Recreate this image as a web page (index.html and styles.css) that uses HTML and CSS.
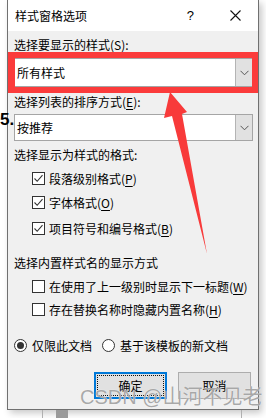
FILE: index.html
```html
<!DOCTYPE html>
<html lang="zh-CN">
<head>
    <meta charset="UTF-8">
    <meta name="viewport" content="width=device-width, initial-scale=1.0">
    <title>样式窗格选项</title>
    <link rel="stylesheet" href="styles.css">
</head>
<body>

    <div class="page">
        <div class="dialog">
            <!-- Title bar -->
            <div class="titlebar">
                <span class="title">样式窗格选项</span>
                <span class="help">?</span>
                <svg class="close" width="11" height="11" viewBox="0 0 11 11">
                    <path d="M0.5 0.5 L10.5 10.5 M10.5 0.5 L0.5 10.5" stroke="#111" stroke-width="1.1" fill="none"/>
                </svg>
            </div>

            <div class="dialog-body">
                <div class="label l1">选择要显示的样式(<u>S</u>):</div>
                <div class="combo combo-tall">
                    <span class="combo-text">所有样式</span>
                    <span class="combo-btn">
                        <svg width="9" height="6" viewBox="0 0 9 6"><path d="M0.5 0.8 L4.5 4.8 L8.5 0.8" stroke="#555" fill="none"/></svg>
                    </span>
                </div>

                <div class="label l2">选择列表的排序方式(<u>E</u>):</div>
                <div class="combo">
                    <span class="combo-text">按推荐</span>
                    <span class="combo-btn">
                        <svg width="9" height="6" viewBox="0 0 9 6"><path d="M0.5 0.8 L4.5 4.8 L8.5 0.8" stroke="#555" fill="none"/></svg>
                    </span>
                </div>

                <div class="label l3">选择显示为样式的格式:</div>
                <div class="check-row cb1">
                    <span class="box checked"><svg width="11" height="11" viewBox="0 0 11 11"><path d="M1.5 5.5 L4.2 8.3 L9.5 2.2" stroke="#333" stroke-width="1.1" fill="none"/></svg></span>
                    <span>段落级别格式(<u>P</u>)</span>
                </div>
                <div class="check-row cb2">
                    <span class="box checked"><svg width="11" height="11" viewBox="0 0 11 11"><path d="M1.5 5.5 L4.2 8.3 L9.5 2.2" stroke="#333" stroke-width="1.1" fill="none"/></svg></span>
                    <span>字体格式(<u>O</u>)</span>
                </div>
                <div class="check-row cb3">
                    <span class="box checked"><svg width="11" height="11" viewBox="0 0 11 11"><path d="M1.5 5.5 L4.2 8.3 L9.5 2.2" stroke="#333" stroke-width="1.1" fill="none"/></svg></span>
                    <span>项目符号和编号格式(<u>B</u>)</span>
                </div>

                <div class="label l4">选择内置样式名的显示方式</div>
                <div class="check-row cb4">
                    <span class="box"></span>
                    <span>在使用了上一级别时显示下一标题(<u>W</u>)</span>
                </div>
                <div class="check-row cb5">
                    <span class="box"></span>
                    <span>存在替换名称时隐藏内置名称(<u>H</u>)</span>
                </div>

                <div class="radio-row">
                    <span class="radio on"></span>
                    <span class="radio-label">仅限此文档</span>
                    <span class="radio"></span>
                    <span class="radio-label">基于该模板的新文档</span>
                </div>

                <div class="buttons">
                    <button class="btn btn-default"><span class="focus">确定</span></button>
                    <button class="btn">取消</button>
                </div>
            </div>
        </div>

        <!-- bits of the document behind the dialog -->
        <div class="below"><span class="below-block"></span></div>

        <!-- annotations drawn on the screenshot -->
        <div class="stray">5.</div>
        <div class="highlight"></div>
        <svg class="arrow" width="266" height="418" viewBox="0 0 266 418">
            <polygon points="170,92 187,112 182,114 207,254 172,116 164,118" fill="#f83a3a"/>
        </svg>
        <div class="watermark">CSDN @山河不见老</div>
    </div>

</body>
</html>
```

FILE: styles.css
```css
body {
    margin: 0;
    padding: 0;
    background-color: #ffffff;
    font-family: "Noto Sans CJK SC", "Microsoft YaHei", sans-serif;
    font-size: 12px;
    color: #000;
}

.page {
    position: relative;
    width: 266px;
    height: 418px;
    overflow: hidden;
}

.dialog {
    margin-left: 7px;
    width: 250px;
    border: 1px solid #707070;
    border-top: none;
    background-color: #f0f0f0;
    box-shadow: 3px 3px 7px rgba(0, 0, 0, 0.22);
}

/* Title bar */
.titlebar {
    display: flex;
    align-items: center;
    height: 31px;
    background-color: #ffffff;
    padding-left: 7px;
}

.title {
    line-height: 31px;
}

.help {
    margin-left: auto;
    font-size: 13px;
    line-height: 31px;
    font-family: "Liberation Sans", sans-serif;
}

.close {
    margin-left: 36px;
    margin-right: 17px;
}

/* Body */
.dialog-body {
    padding: 0 6px 10px 6px;
}

.label {
    height: 16px;
    line-height: 16px;
    white-space: nowrap;
}

.l1 { margin-top: 6px; }
.l2 { margin-top: 7px; }
.l3 { margin-top: 6px; }
.l4 { margin-top: 17px; }

u {
    text-decoration-thickness: 1px;
    text-underline-offset: 2px;
}

/* Combo boxes */
.combo {
    display: flex;
    align-items: stretch;
    height: 27px;
    margin-top: 4px;
    margin-right: -1px;
    box-sizing: border-box;
    border: 1px solid #a5a5a5;
    background-color: #ffffff;
}

.combo-tall {
    height: 29px;
    margin-top: 5px;
}

.combo-text {
    flex: 1;
    padding-left: 2px;
    display: flex;
    align-items: center;
}

.combo-btn {
    width: 16px;
    display: flex;
    align-items: center;
    justify-content: center;
    background-color: #e1e1e1;
    border-left: 1px solid #b4b4b4;
}

/* Check boxes */
.check-row {
    display: flex;
    align-items: center;
    height: 20px;
    padding-left: 18px;
    white-space: nowrap;
}

.cb1 { margin-top: 5px; }
.cb2 { margin-top: 4px; }
.cb3 { margin-top: 6px; }
.cb4 { margin-top: 5px; }
.cb5 { margin-top: 3px; }

.box {
    width: 11px;
    height: 11px;
    border: 1px solid #333333;
    background-color: #ffffff;
    margin-right: 4px;
    display: flex;
}

/* Radio buttons */
.radio-row {
    display: flex;
    align-items: center;
    height: 20px;
    margin-top: 16px;
    white-space: nowrap;
}

.radio {
    width: 11px;
    height: 11px;
    border: 1px solid #333333;
    border-radius: 50%;
    background-color: #ffffff;
    margin-right: 5px;
    position: relative;
}

.radio.on::after {
    content: "";
    position: absolute;
    left: 2px;
    top: 2px;
    width: 7px;
    height: 7px;
    border-radius: 50%;
    background-color: #333333;
}

.radio-label {
    margin-right: 10px;
}

/* Buttons */
.buttons {
    display: flex;
    justify-content: flex-end;
    gap: 11px;
    margin-top: 17px;
    margin-right: 1px;
}

.btn {
    width: 73px;
    height: 27px;
    box-sizing: border-box;
    border: 1px solid #adadad;
    background-color: #e1e1e1;
    font-family: inherit;
    font-size: 12px;
    padding: 0;
    color: #000;
}

.btn-default {
    border: 2px solid #0078d7;
    padding: 1px;
}

.focus {
    display: flex;
    align-items: center;
    justify-content: center;
    height: 100%;
    box-sizing: border-box;
    border: 1px dotted #111;
}

/* Document behind the dialog */
.below {
    margin-left: 42px;
    width: 198px;
    height: 8px;
    border-left: 1px solid #b0b0b0;
    border-right: 1px solid #b0b0b0;
    display: flex;
}

.below-block {
    margin-left: 13px;
    width: 12px;
    height: 8px;
    background-color: #9a9a9a;
}

/* Overlays */
.stray {
    position: absolute;
    left: 0;
    top: 110px;
    font-family: "Liberation Sans", sans-serif;
    font-weight: bold;
    font-size: 17px;
    line-height: 20px;
}

.highlight {
    position: absolute;
    left: 8px;
    top: 52px;
    width: 250px;
    height: 41px;
    box-sizing: border-box;
    border: 6px solid #fb3b3b;
    border-left-width: 7px;
}

.arrow {
    position: absolute;
    left: 0;
    top: 0;
}

.watermark {
    position: absolute;
    left: 80px;
    top: 384px;
    font-size: 20px;
    line-height: 26px;
    font-family: "Liberation Sans", "Noto Sans CJK SC", sans-serif;
    color: rgba(140, 140, 140, 0.75);
    text-shadow: 0 0 1px #ffffff;
    white-space: nowrap;
}
```
